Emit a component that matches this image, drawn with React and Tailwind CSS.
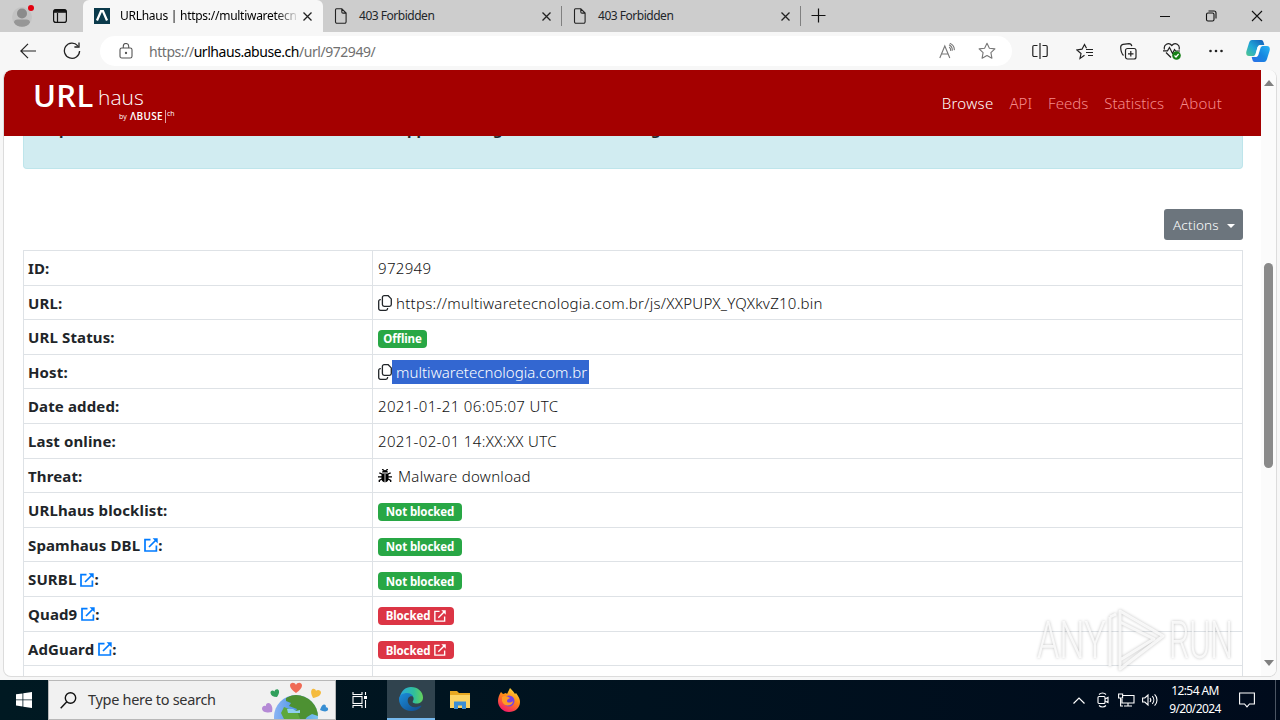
import React from "react";

const Doc = () => (
  <svg className="h-4 w-4 shrink-0" viewBox="0 0 16 16" fill="none" stroke="#222" strokeWidth="1.1">
    <path d="M3.5 .8h5.3l4.3 4.3v8.7a1.4 1.4 0 0 1-1.4 1.4H3.9a1.4 1.4 0 0 1-1.4-1.4V2A1.2 1.2 0 0 1 3.5.8zM8.8 .8v3.1c0 .7.5 1.2 1.2 1.2h3.1" />
  </svg>
);

const Close = () => (
  <svg className="h-[9px] w-[9px] shrink-0" viewBox="0 0 9 9" stroke="#222" strokeWidth="1.3">
    <path d="M.5 .5l8 8M8.5 .5l-8 8" />
  </svg>
);

const Copy = () => (
  <svg className="h-4 w-[14px] shrink-0" viewBox="0 0 14 16" fill="none" stroke="#212529" strokeWidth="1.3">
    <path d="M6.2.7h4l3.1 3.2v5.7a1.8 1.8 0 0 1-1.8 1.8H6.2a1.8 1.8 0 0 1-1.8-1.8V2.5a1.8 1.8 0 0 1 1.8-1.8z" />
    <path d="M2.8 4.6h-.4A1.7 1.7 0 0 0 .7 6.3v7.2a1.8 1.8 0 0 0 1.800 1.800h5.400a1.700 1.700 0 0 0 1.700-1.700v-.5" />
  </svg>
);

const Ext = ({ small }) => (
  <svg className={small ? "h-3 w-3 shrink-0" : "h-[14px] w-[14px] shrink-0"} viewBox="0 0 14 14" fill="none" stroke="currentColor" strokeWidth={small ? "1.6" : "1.7"}>
    <path d="M6.500 1.600H1v11.400h11.400V7.500M5 9l7-7" />
    <path d="M8.600.3h5.100v5.100z" fill="currentColor" stroke="none" />
  </svg>
);

const Bug = () => (
  <svg className="h-[14px] w-[14px] shrink-0" viewBox="0 0 14 14">
    <path d="M4 3.600C4.200 1.900 5.300 1 7 1s2.800.9 3 2.600zM3.500 4.500h7v5.200c0 2.100-1.400 3.500-3.500 3.500s-3.500-1.400-3.500-3.500z" fill="#000" />
    <path d="M4 5L1.300 3.800M10 5l2.700-1.200M4 7.800H0M10 7.800h4M4 10l-2.700 1.300V13M10 10l2.700 1.300V13M4.300 0l1.400 1.500M9.700 0L8.300 1.500" stroke="#000" strokeWidth="1.300" fill="none" />
    <path d="M7 5v8" stroke="#fff" strokeWidth=".8" />
  </svg>
);

const Tab = ({ children }) => (
  <div className="flex h-8 w-[238px] shrink-0 items-center pl-[10px] pr-[10px]">
    <Doc />
    <span className="ml-[10px] flex-1 whitespace-nowrap text-[12px] tracking-[-0.48px]">{children}</span>
    <Close />
  </div>
);

const Label = ({ children }) => (
  <span className="whitespace-nowrap text-[15px] font-bold tracking-[0.13px]">{children}</span>
);

const Row = ({ label, link, children }) => (
  <div className="flex h-[34.6px] shrink-0 border-t border-[#dee2e6]">
    <div className="flex w-[348px] shrink-0 items-center pl-1 pt-[1px]">
      <Label>{label}</Label>
      {link && (
        <>
          <span className="ml-[4px] text-[#007bff]"><Ext /></span>
          <Label>:</Label>
        </>
      )}
    </div>
    <div className="flex min-w-0 flex-1 items-center border-l border-[#dee2e6] pl-[5px] pt-[1px]">{children}</div>
  </div>
);

const Txt = ({ children, className = "tracking-[0.34px] text-[#111]" }) => (
  <span className={"whitespace-nowrap text-[15px] font-light " + className}>{children}</span>
);

const Green = ({ children, className = "w-[84px]" }) => (
  <span className={"mt-[3px] flex h-[18px] items-center justify-center rounded-[4px] bg-[#28a745] text-[11.5px] font-bold tracking-[-0.12px] text-white " + className}>{children}</span>
);

const Red = () => (
  <span className="mt-[3px] flex h-[18px] w-[76px] items-center justify-center gap-[4px] rounded-[4px] bg-[#dc3545] text-[11.5px] font-bold tracking-[-0.12px] text-white">
    Blocked <Ext small />
  </span>
);

const TitleBar = () => (
  <div className="flex h-8 shrink-0 bg-[#cdcdcd]">
    <div className="flex w-[83px] shrink-0 items-center pl-[12px]">
      <svg className="h-6 w-6" viewBox="0 0 24 24">
        <circle cx="10" cy="13" r="10" fill="#c3c3c3" />
        <circle cx="10" cy="9.500" r="5" fill="#8b8b8b" />
        <path d="M2 18.500c0-2 1.500-3 3.500-3h9c2 0 3.500 1 3.500 3-1.500 3-4.500 4.200-8 4.200s-6.500-1.200-8-4.200z" fill="#979797" />
        <circle cx="19" cy="4" r="3" fill="#e3000f" />
      </svg>
      <svg className="ml-[17px] h-[14px] w-[14px]" viewBox="0 0 14 14" fill="none" stroke="#111" strokeWidth="1.200">
        <rect x=".6" y=".6" width="12.800" height="12.800" rx="2.200" />
        <path d="M.6 3.200h12.800M4.500 4v9" />
        <path d="M1 1.800h12" strokeWidth="2.200" />
      </svg>
    </div>
    <div className="flex h-8 w-[240px] shrink-0 items-center rounded-t-[6px] bg-[#f7f7f7] pl-[11px] pr-[11px]">
      <svg className="h-4 w-4 shrink-0" viewBox="0 0 16 16">
        <path d="M0 0h16v16H0z" fill="#0b3a4b" />
        <path d="M3 12.500L7 3.200h2l4 9.300" fill="none" stroke="#fff" strokeWidth="2.200" />
      </svg>
      <span className="ml-[10px] whitespace-nowrap bg-linear-to-r from-black from-88% to-black/10 bg-clip-text text-[12px] tracking-[-0.27px] text-transparent">URLhaus | https://multiwaretecn</span>
      <span className="ml-auto"><Close /></span>
    </div>
    <Tab>403 Forbidden</Tab>
    <div className="my-[6px] w-px bg-[#808080]" />
    <Tab>403 Forbidden</Tab>
    <div className="my-[6px] w-px bg-[#808080]" />
    <svg className="ml-[10px] mt-[8px] h-[15px] w-[15px]" viewBox="0 0 15 15" stroke="#111" strokeWidth="1.200"><path d="M7.500.5v14M.5 7.500h14" /></svg>
    <svg className="ml-auto mr-[17px] mt-[10px] h-3 w-[104px]" viewBox="0 0 104 12" fill="none" stroke="#111" strokeWidth="1.100">
      <path d="M1 6.500h10M93 1l10 10M103 1L93 11" />
      <rect x="47.500" y="3" width="7.500" height="8" rx="1.500" />
      <path d="M49.500 1h5.500a2 2 0 0 1 2 2v5.500" />
    </svg>
  </div>
);

const Tool = ({ children }) => <div className="flex w-11 shrink-0 justify-center">{children}</div>;

const Toolbar = () => (
  <div className="flex h-[38px] shrink-0 items-center bg-[#f7f7f7] pl-[20px]">
    <svg className="h-4 w-4" viewBox="0 0 16 16" fill="none" stroke="#222" strokeWidth="1.200"><path d="M16 8H.8M8 .8L.8 8 8 15.200" /></svg>
    <svg className="ml-[27px] h-[18px] w-[18px]" viewBox="0 0 18 18" fill="none" stroke="#222" strokeWidth="1.300"><path d="M14.800 3.800A7.600 7.600 0 1 0 16.600 9M16 .5v4.500h-4.600" /></svg>
    <div className="ml-[19px] flex h-[30px] w-[912px] shrink-0 items-center rounded-full bg-white pl-[19px] pr-[16px]">
      <svg className="h-4 w-[14px]" viewBox="0 0 14 16" fill="none" stroke="#555" strokeWidth="1.100">
        <rect x="1" y="5" width="12" height="10" rx="1.800" /><path d="M4.300 5V3.200a2.700 2.700 0 0 1 5.400 0V5" /><circle cx="7" cy="10" r=".6" fill="#555" />
      </svg>
      <span className="ml-[16px] text-[14px] tracking-[-0.45px] text-[#707070]">https://<span className="text-black">urlhaus.abuse.ch</span>/url/972949/</span>
      <svg className="ml-auto h-[17px] w-[17px]" viewBox="0 0 17 17" fill="none" stroke="#777" strokeWidth="1.100">
        <path d="M.8 15L5.800 3l5 12M2.500 11h6.700M10.200 4c1.200 1 1.700 2.300 1.500 4M10 1.800c2.300 1.200 3.500 3 3.300 5.800M10.800.3c3.200 1.400 4.700 3.600 4.500 6.800" />
      </svg>
      <svg className="ml-[22px] h-[18px] w-[18px]" viewBox="0 0 18 18" fill="none" stroke="#777" strokeWidth="1.100" strokeLinejoin="round">
        <path d="M9 1.200l2.400 5 5.500.7-4 3.800 1 5.500L9 13.500l-4.900 2.700 1-5.500-4-3.800 5.500-.7z" />
      </svg>
    </div>
    <div className="ml-[6px] flex items-center">
      <Tool><svg className="h-4 w-4" viewBox="0 0 16 16" fill="none" stroke="#222" strokeWidth="1.200"><path d="M5.500 2.500H2A1.200 1.200 0 0 0 .8 3.700v8.600A1.200 1.200 0 0 0 2 13.500h3.500M10.500 2.500H14a1.200 1.200 0 0 1 1.200 1.200v8.600a1.200 1.200 0 0 1-1.200 1.200h-3.500M8 0v16" /></svg></Tool>
      <Tool><svg className="h-[17px] w-[17px]" viewBox="0 0 17 17" fill="none" stroke="#222" strokeWidth="1.200"><path d="M8.500 12.300L4 15.500l1-5L.8 7l5.200-.8L8.500 1.500l2 3.700M10 6.500h7M10 9.500h7M12 12.500h5" /></svg></Tool>
      <Tool><svg className="h-[17px] w-[17px]" viewBox="0 0 17 17" fill="none" stroke="#222" strokeWidth="1.200"><rect x="5.500" y="5.500" width="10.500" height="10.500" rx="2" /><path d="M10.800 8v5.500M8 10.800h5.500M3.500 12.500C2 11 .8 8 .7 4.500.6 3 1.500 1.700 3 1.300l6-.7c1.500 0 2.500.8 2.800 2.500" /></svg></Tool>
      <Tool>
        <svg className="h-[18px] w-[18px]" viewBox="0 0 18 18" fill="none" stroke="#222" strokeWidth="1.200">
          <path d="M1.500 7.500C.2 3 5.500-.5 8.800 3.500 12.200-.5 17.500 3 16 7.500M3 10.500l5 5M0 8.800h4.500L6.500 5.500l3 6 2-4 1.200 1.500H17" /><circle cx="13.500" cy="13.500" r="4.300" fill="#168016" stroke="none" /><path d="M11.500 13.500l1.500 1.500 2.600-3" stroke="#fff" />
        </svg>
      </Tool>
      <Tool><svg className="h-1 w-[14px]" viewBox="0 0 14 4" fill="#222"><circle cx="1.500" cy="2" r="1.300" /><circle cx="7" cy="2" r="1.300" /><circle cx="12.500" cy="2" r="1.300" /></svg></Tool>
      <svg className="ml-[8px] h-6 w-6" viewBox="0 0 24 24">
        <defs>
          <linearGradient id="ca" x1="0" y1="1" x2="1" y2="0"><stop offset="0" stopColor="#51c78c" /><stop offset=".45" stopColor="#20a7d8" /><stop offset="1" stopColor="#1359b7" /></linearGradient>
          <linearGradient id="cb" x1="0" y1="1" x2="1" y2="0"><stop offset="0" stopColor="#2d6ee8" /><stop offset=".5" stopColor="#1687e0" /><stop offset="1" stopColor="#29b4f4" /></linearGradient>
        </defs>
        <path d="M6 1h9c2.200 0 2.600 2 3.300 5h-4c-2 0-2.600 1.500-3.300 4l-1.500 5c-.5 1.500-1.500 2-3 2H3c-2.500 0-3.300-2-2.500-5L3 4c.6-2 1.500-3 3-3z" fill="url(#ca)" />
        <path d="M18 23H9c-2.200 0-2.600-2-3.300-5h4c2 0 2.600-1.500 3.300-4l1.500-5c.5-1.500 1.500-2 3-2H21c2.500 0 3.300 2 2.500 5L21 20c-.6 2-1.500 3-3 3z" fill="url(#cb)" />
        <path d="M11.500 8.500c.6-1.500 1.500-2 2.800-2l-3 10c-.4 1-1 1.300-2.300 1.300z" fill="#fff" />
      </svg>
    </div>
  </div>
);

const Nav = () => (
  <div className="flex h-[66px] w-[1257px] shrink-0 items-start rounded-tl-[8px] bg-[#a40000] pl-[29px] pr-[39px] text-white">
    <div className="relative h-[60px] w-[150px] font-['Open_Sans',sans-serif]">
      <span className="absolute left-[0px] top-[5px] text-[31px] leading-[40px] font-semibold tracking-[0.3px]">URL</span>
      <span className="absolute left-[65px] top-[13px] text-[21px] leading-[28px] font-light">haus</span>
      <span className="absolute left-[86px] top-[41px] text-[7px] leading-[12px]">by</span>
      <span className="absolute left-[97px] top-[39px] text-[10px] leading-[14px] font-semibold tracking-[0.3px]">ΛBUSE</span>
      <span className="absolute left-[132px] top-[40px] h-[13px] w-px bg-[#e0a0a0]" />
      <span className="absolute left-[134px] top-[38px] text-[7px] leading-[12px]">ch</span>
    </div>
    <div className="ml-auto flex gap-4 pt-[22px] text-[15px] leading-[22px] font-light text-[#f58a8a]">
      <span className="tracking-[0.3px] text-white">Browse</span>
      <span>API</span>
      <span>Feeds</span>
      <span>Statistics</span>
      <span className="tracking-[0.2px]">About</span>
    </div>
  </div>
);

const Watermark = () => (
  <div className="absolute left-[1037px] top-[608px] flex items-center font-['Roboto',sans-serif] text-[#ffffff]/80 [filter:drop-shadow(0_0_1.5px_rgba(0,0,0,.3))]">
    <span className="inline-block w-[67px]"><span className="inline-block origin-left scale-x-[.7] text-[51px] leading-[66px] font-light">ANY</span></span>
    <svg className="h-[66px] w-[62px]" viewBox="0 0 62 66" fill="none" stroke="#fff" strokeOpacity=".8" strokeWidth="3" strokeLinejoin="round">
      <path d="M16 3l43 25-43 33zM16 14l34 17-34 21M6 9v49M6 9l6-3" />
    </svg>
    <span className="ml-[3px] inline-block origin-left scale-x-[.625] text-[51px] leading-[66px] font-light">RUN</span>
  </div>
);

const Taskbar = () => (
  <div className="flex h-10 shrink-0 bg-linear-to-r from-[#001922] to-[#000b1c]">
    <div className="flex w-12 items-center justify-center">
      <svg className="h-4 w-4" viewBox="0 0 16 16" fill="#fff"><path d="M0 2.300l6.500-.9v6.100H0zM7.300 1.300L16 0v7.500H7.300zM0 8.300h6.500v6.200L0 13.600zM7.300 8.300H16V16l-8.700-1.300z" /></svg>
    </div>
    <div className="flex w-[288px] items-center border border-[#b8b8b8] bg-[#f1f1f1] pl-[11px] text-[#222]">
      <svg className="h-[17px] w-[17px]" viewBox="0 0 17 17" fill="none" stroke="#111" strokeWidth="1.400"><circle cx="10.500" cy="6" r="5.200" /><path d="M6.800 9.700L.7 16.200" /></svg>
      <span className="ml-[11px] text-[14.500px] whitespace-nowrap tracking-[-0.3px] text-[#333]">Type here to search</span>
      <svg className="ml-auto mr-[3px] h-[38px] w-[72px]" viewBox="0 0 72 38">
        <defs>
          <clipPath id="globe"><circle cx="36" cy="36" r="22" /></clipPath>
          <linearGradient id="sea"><stop stopColor="#8ab4f4" /><stop offset=".5" stopColor="#4f96e6" /><stop offset="1" stopColor="#7cc4ef" /></linearGradient>
        </defs>
        <circle cx="36" cy="36" r="22" fill="url(#sea)" />
        <g clipPath="url(#globe)">
          <path d="M26 17l8-4 14 2 10 11v9l-6-2-5 3-3 4-6-3-3-5 2-4-8-3 2-3-5-2z" fill="#4d9132" />
          <path d="M24 26l5 2 8 2 3 8H24l-3-6z" fill="#5ea83b" />
          <path d="M27 28h6l3 2 4-1v3H28z" fill="#8fd0ee" />
        </g>
        <g>
          <path d="M36 12c-4-3-6-5-6-7.500C30 1 35 1 36 4c1-3 6-3 6 .5 0 2.500-2 4.500-6 7.500z" fill="#ef6a55" />
          <path d="M17 16c-4 0-6-1.500-6.500-4-.4-2.500 2.500-3.500 4-1.500.3-2.500 4-3 4.500-.5.4 2-.7 4-2 6z" fill="#31a05c" />
          <path d="M53 17c-1.500-3-2.500-6-1.500-8 1.200-2 4-1.500 4.500.8 1.500-1.500 5-.8 5 1.700 0 3-4 5-8 5.500z" fill="#f5bb3d" />
          <path d="M12 31c-4 1-9.500.5-10-3-.3-2.500 2-4 4-3-.5-2.500 2.500-4 4.500-2 2 2 2.300 5 1.500 8z" fill="#b58ad6" />
          <path d="M60 29c1-3 2-5.500 4-5.500 1.800 0 2.300 1.500 1.800 2.800 1.700-.3 3 1.300 2 3-1.300 1.800-4.800 1.200-7.800-.3z" fill="#378ed3" />
        </g>
      </svg>
    </div>
    <div className="flex w-[51px] items-center justify-center pr-[3px]">
      <svg className="h-4 w-4" viewBox="0 0 16 16" fill="none" stroke="#fff" strokeWidth="1.100"><rect x="1" y="4.500" width="9" height="7" /><path d="M1 0v2.500h9V0M1 16v-2.500h9V16M13.500 0v3M13.500 8v8" /><path d="M12 4h3v3h-3z" fill="#fff" stroke="none" /></svg>
    </div>
    <div className="flex w-12 items-center justify-center border-b-2 border-[#76b9ed] bg-[#30434e]">
      <svg className="h-6 w-6" viewBox="0 0 24 24">
        <defs><linearGradient id="ea"><stop stopColor="#2aa8df" /><stop offset=".6" stopColor="#2fbf9c" /><stop offset="1" stopColor="#65d25a" /></linearGradient><linearGradient id="eb" x2="1" y2="1"><stop stopColor="#1b8edb" /><stop offset="1" stopColor="#114a8b" /></linearGradient></defs>
        <path d="M1 10C2 4 6.500 0 12 0c7 0 12 5 12 10.500 0 4-3 6-6.500 6-3 0-4.500-1-3.500-2.500 2-3-.5-7-5-7-4 0-7 1.500-8 3z" fill="url(#ea)" />
        <path d="M0 12c0-4 4-6 8-6 3 0 5 1.500 6 3.500-4-1-6 2-5 6 1 3.500 5 5.500 9 4.500 2-.5 4-1.500 4.500-1C20 23 16 24 12 24 5 24 0 18.500 0 12z" fill="url(#eb)" />
      </svg>
    </div>
    <div className="flex w-[49px] items-center justify-center">
      <svg className="h-5 w-[22px]" viewBox="0 0 22 20"><path d="M1 1h7l2 2h11v5H1z" fill="#e8a821" /><path d="M1 5h20v13H1z" fill="#fdd464" /><path d="M5 11.500h12V19h-4v-3.500H9V19H5z" fill="#3c8fd6" /></svg>
    </div>
    <div className="flex w-[49px] items-center justify-center">
      <svg className="h-6 w-6" viewBox="0 0 24 24">
        <defs><linearGradient id="ff" x1=".8" y1="0" x2=".3" y2="1"><stop stopColor="#ffe140" /><stop offset=".45" stopColor="#ff8a16" /><stop offset="1" stopColor="#f5156c" /></linearGradient></defs>
        <path d="M4 4l2 2 3-1 1 1 3-6c3 3 4 4 5 6l1-1c3 4 4 6 4 9 0 6-5 10-11 10S1 19 1 13c0-3 1-6 3-9z" fill="url(#ff)" /><circle cx="12" cy="13" r="5.500" fill="#7542e5" /><path d="M5 9c3-2 5-1 8 1-1 1-3 1-3 3s4 2 6 0c0 5-9 7-11 0z" fill="#ff9a25" />
      </svg>
    </div>
    <div className="ml-auto flex items-center text-white">
      <svg className="h-[7px] w-3" viewBox="0 0 12 7" fill="none" stroke="#fff" strokeWidth="1.200"><path d="M.5 6.500L6 1l5.500 5.500" /></svg>
      <svg className="ml-[12px] h-4 w-3" viewBox="0 0 12 16" fill="none" stroke="#fff" strokeWidth="1.100"><rect x="1" y="4.500" width="7" height="7" rx="1" /><path d="M8 7l3-1.500v5L8 9M2 2.500C4 .5 7 .5 9 2.500M2 13.500c2 2 5 2 7 0" /></svg>
      <svg className="ml-[9px] h-[14px] w-[17px]" viewBox="0 0 17 14" fill="none" stroke="#fff" strokeWidth="1.100"><path d="M5 2.500h11v7.500H4V6M6 13h8M10 10v3M.6 1h4v4h-4zM2.600 5v8H5" /></svg>
      <svg className="ml-[7px] h-[14px] w-[17px]" viewBox="0 0 17 14" fill="none" stroke="#fff" strokeWidth="1.100"><path d="M.6 5h2.200L6 2v10L2.800 9H.6zM8 5c1 1.200 1 2.800 0 4M10.300 3.200c2 2.200 2 5.400 0 7.600M12.600 1.300c3.200 3.200 3.200 8.200 0 11.400" /></svg>
      <div className="ml-[8px] w-[56px] text-center text-[12px] leading-[18px] whitespace-nowrap"><div className="tracking-[-0.6px]">12:54 AM</div><div className="tracking-[-0.6px]">9/20/2024</div></div>
      <svg className="ml-[16px] mr-[20px] h-4 w-4" viewBox="0 0 16 16" fill="none" stroke="#fff" strokeWidth="1.100"><path d="M.6 1h14.800v11H10.500L8 14.800 5.500 12H.6z" /></svg>
      <div className="h-10 w-px bg-[#4b5563]" />
      <div className="w-[4px]" />
    </div>
  </div>
);

export default function App() {
  return (
    <div className="relative flex h-[720px] w-[1280px] flex-col overflow-hidden bg-[#f7f7f7] font-['Noto_Sans',sans-serif] text-[#212529]">
      <TitleBar />
      <Toolbar />
      <div className="mb-[3px] ml-[3px] mr-[3px] flex h-[607px] shrink-0 overflow-hidden rounded-[8px] border-x border-b border-[#dcdcdc] bg-white">
        <div className="flex w-[1257px] shrink-0 flex-col">
          <Nav />
          <div className="ml-[19px] flex h-[33px] w-[1220px] shrink-0 items-start overflow-hidden rounded-b-[4px] border-x border-b border-[#bee5eb] bg-[#d1ecf1]">
            <div className="ml-[35px] mt-[-16px] text-[15px] leading-[18px] font-bold text-[#212529]">
              <span className="inline-block w-[348px]">p</span>
              <span className="inline-block w-[86px]">pp</span>
              <span className="inline-block w-[158px]">g</span>
              <span>g</span>
            </div>
          </div>
          <div className="mt-[40px] ml-[1160px] flex h-[31px] w-[79px] shrink-0 items-center rounded-[3px] bg-[#6c757d] pl-[9px] pt-[2px] text-white">
            <span className="text-[13.500px] font-light tracking-[0.15px]">Actions</span>
            <span className="ml-[8px] border-x-4 border-t-4 border-x-transparent border-t-white" />
          </div>
          <div className="mt-[10px] ml-[19px] flex w-[1220px] min-h-0 flex-1 flex-col overflow-hidden border-x border-[#dee2e6]">
            <Row label="ID:"><Txt>972949</Txt></Row>
            <Row label="URL:"><Copy /><Txt className="ml-[4px] tracking-[0.26px] text-[#111]">https://multiwaretecnologia.com.br/js/XXPUPX_YQXkvZ10.bin</Txt></Row>
            <Row label="URL Status:"><Green className="w-[49px]">Offline</Green></Row>
            <Row label="Host:"><Copy /><span className="flex h-6 w-[197px] items-center bg-[#3367d1] pl-[4px] text-white"><Txt className="tracking-[0.04px]">multiwaretecnologia.com.br</Txt></span></Row>
            <Row label="Date added:"><Txt>2021-01-21 06:05:07 UTC</Txt></Row>
            <Row label="Last online:"><Txt>2021-02-01 14:XX:XX UTC</Txt></Row>
            <Row label="Threat:"><Bug /><Txt className="ml-[6px] tracking-[0.28px] text-[#111]">Malware download</Txt></Row>
            <Row label="URLhaus blocklist:"><Green>Not blocked</Green></Row>
            <Row label="Spamhaus DBL" link><Green>Not blocked</Green></Row>
            <Row label="SURBL" link><Green>Not blocked</Green></Row>
            <Row label="Quad9" link><Red /></Row>
            <Row label="AdGuard" link><Red /></Row>
            <Row label="" />
          </div>
        </div>
        <div className="flex flex-1 flex-col items-center bg-[#fbfbfb]">
          <div className="mt-[10px] border-x-[5px] border-b-[6px] border-x-transparent border-b-[#808080]" />
          <div className="mt-[177px] h-[205px] w-[9px] rounded-full bg-[#8a8a8a]" />
          <div className="mt-auto mb-[10px] border-x-[5px] border-t-[6px] border-x-transparent border-t-[#808080]" />
        </div>
      </div>
      <Taskbar />
      <Watermark />
    </div>
  );
}
